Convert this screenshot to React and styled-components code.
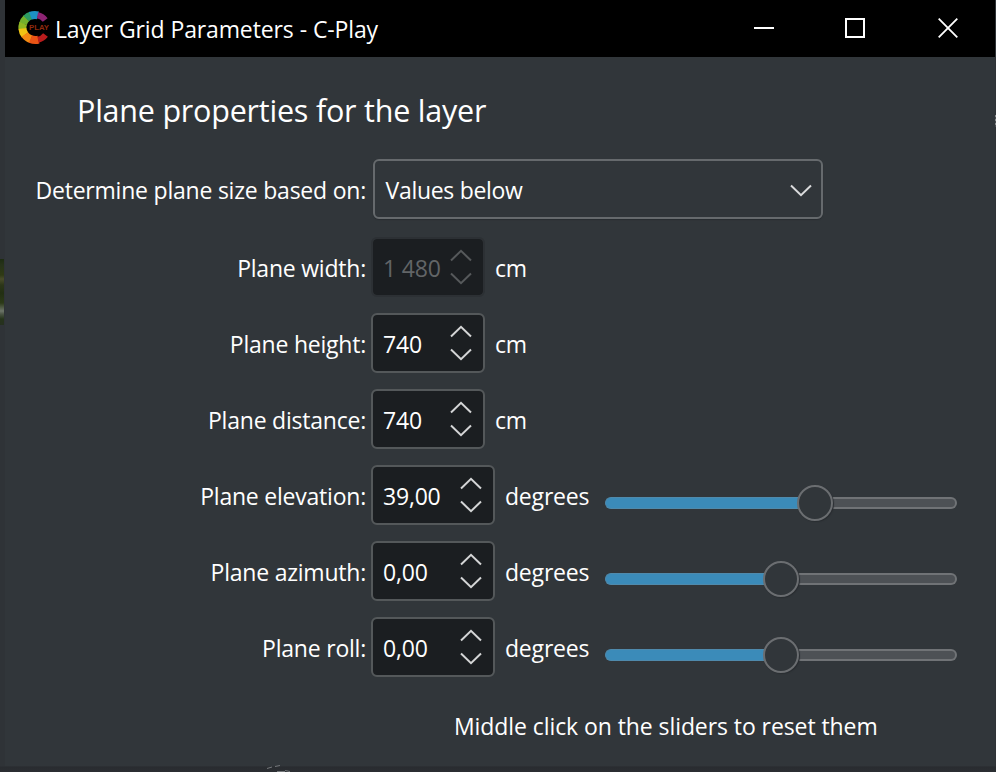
import React from "react";
import styled, { createGlobalStyle } from "styled-components";

const GlobalStyle = createGlobalStyle`
  *, *::before, *::after { box-sizing: border-box; }
  body { margin: 0; background: #2b2f33; overflow: hidden; }
`;

const Desktop = styled.div`
  position: relative;
  width: 996px;
  height: 772px;
  padding: 0 1px 6px 5px;
  background: linear-gradient(to bottom, #2f3337 0, #2f3337 766px, #292c30 767px, #2b2e32 772px);
  color: #fff;
  font-family: "Open Sans", "Noto Sans", sans-serif;
  font-size: 23px;
  line-height: 32px;
  white-space: pre;
  overflow: hidden;
`;

const Foliage = styled.div`
  position: absolute;
  left: 0;
  top: 259px;
  width: 4px;
  height: 66px;
  background: linear-gradient(
    to bottom,
    #1d2c12 0, #27331a 6px, #2f3a14 16px, #494c2a 20px, #2c3618 26px,
    #222f13 34px, #2c3a18 44px, #6c7468 52px, #4b5545 55px, #26341b 60px, #26301f 66px
  );
`;

const Debris = styled.svg`
  position: absolute;
  left: 262px;
  top: 764px;
`;

const EdgeMark = styled.div`
  position: absolute;
  right: 0;
  top: 115px;
  width: 1px;
  height: 12px;
  background: repeating-linear-gradient(to bottom, #8b8e90 0 2px, #4a4d50 2px 4px);
`;

const Window = styled.main`
  width: 990px;
  height: 766px;
  background: #31363a;
`;

const TitleBar = styled.header`
  height: 57px;
  display: flex;
  align-items: center;
  padding: 0 37px 1px 12px;
  background: #000;
`;

const Title = styled.h1`
  flex: 1;
  margin: 0 0 0 2px;
  font-size: 23px;
  font-weight: 400;
  letter-spacing: -0.15px;
  word-spacing: 0.3px;
  padding-top: 2px;
`;

const WindowButtons = styled.div`
  display: flex;
`;

const WindowButton = styled.button`
  display: flex;
  margin: 0 0 0 ${(p) => p.$gap || 0}px;
  padding: 0;
  border: 0;
  background: none;
  color: #fff;
`;

const Body = styled.section`
  padding-top: 37px;
`;

const Heading = styled.h2`
  margin: 0 0 0 72px;
  height: 32px;
  font-size: 30.5px;
  font-weight: 400;
  letter-spacing: -0.22px;
  line-height: 32px;
`;

const Form = styled.div`
  display: grid;
  row-gap: 16px;
  padding-top: 33px;
`;

const Row = styled.div`
  display: grid;
  grid-template-columns: 361px auto auto 1fr;
  column-gap: 5px;
  align-items: center;
  height: 60px;
  margin-bottom: ${(p) => (p.$spaced ? "2px" : "0")};
`;

const Label = styled.label`
  text-align: right;
  letter-spacing: -0.22px;
  padding-top: 2px;
`;

const Combo = styled.div`
  display: flex;
  align-items: center;
  justify-content: space-between;
  width: 450px;
  height: 60px;
  margin-left: 2px;
  padding: 2px 9px 0 10.5px;
  border: 2px solid #666a6d;
  border-radius: 6px;
  box-shadow: 0 1px 1px #292d31;
  letter-spacing: -0.3px;
`;

const ComboArrow = styled.span`
  display: flex;
  color: #dadbdc;
`;

const SpinBox = styled.div`
  display: flex;
  align-items: center;
  justify-content: space-between;
  width: ${(p) => (p.$wide ? 124 : 114)}px;
  height: 60px;
  padding: 0 11px 0 10px;
  border: 2px solid ${(p) => (p.$disabled ? "#2c3034" : "#54585a")};
  border-radius: 6px;
  background: #1b1e21;
  background-clip: padding-box;
  color: ${(p) => (p.$disabled ? "#626567" : "#fff")};
`;

const Value = styled.span`
  padding-top: 2px;
  letter-spacing: -0.2px;
`;

const Steppers = styled.span`
  display: flex;
  flex-direction: column;
  gap: 10px;
  color: ${(p) => (p.$disabled ? "#56595b" : "#d4d5d6")};
`;

const Unit = styled.span`
  padding: 2px 0 0 5px;
  letter-spacing: -0.2px;
`;

const SliderCell = styled.div`
  justify-self: end;
  margin-right: 38px;
`;

const Slider = styled.div`
  display: flex;
  align-items: center;
  width: 352px;
  height: 36px;
  margin-top: 16px;
`;

const Filled = styled.div`
  height: 12px;
  border: 1px solid #4f8aac;
  border-right: 0;
  border-radius: 6px 0 0 6px;
  background: #3b8bb9;
`;

const Knob = styled.div`
  flex: none;
  width: 36px;
  height: 36px;
  margin: 0 -2px 0 -1px;
  border: 2px solid #6b6e71;
  border-radius: 50%;
  background: #31363a;
  box-shadow: 1px 1px 1px #292d31;
  z-index: 1;
`;

const Remaining = styled.div`
  flex: 1;
  height: 12px;
  border: 2px solid #707376;
  border-left: 0;
  border-radius: 0 6px 6px 0;
  background: #4d5155;
`;

const Hint = styled.p`
  margin: 33px 0 0 449px;
  letter-spacing: -0.08px;
`;

function Chevron({ up }) {
  return (
    <svg width="22" height="13" viewBox="0 0 22 13" fill="none" stroke="currentColor" strokeWidth="2">
      <path d={up ? "M1 11.5 11 1.8 21 11.5" : "M1 1.5 11 11.2 21 1.5"} />
    </svg>
  );
}

function Logo() {
  return (
    <svg width="36" height="36" viewBox="0 0 36 36" fill="none" strokeWidth="8">
      <path d="M6 14 A12.5 12.5 0 0 1 9.5 8.2" stroke="#73b02c" />
      <path d="M9.2 8.5 A12.5 12.5 0 0 1 14 5.5" stroke="#2c9a62" />
      <path d="M13.4 5.8 A12.5 12.5 0 0 1 21 5.3" stroke="#1c90c4" />
      <path d="M20.5 5.2 A12.5 12.5 0 0 1 28.2 10" stroke="#8d2473" strokeWidth="6" />
      <path d="M5.4 19 A12.5 12.5 0 0 1 6.2 13.5" stroke="#8fb822" />
      <path d="M8 25 A12.5 12.5 0 0 1 5.4 18.5" stroke="#efc414" />
      <path d="M14 29.2 A12.5 12.5 0 0 1 7.7 24.5" stroke="#f38a13" />
      <path d="M21.5 29.6 A12.5 12.5 0 0 1 13.5 29" stroke="#ea5415" />
      <path d="M28.5 25 A12.5 12.5 0 0 1 21 29.7" stroke="#b91c1c" strokeWidth="6" />
      <text x="12" y="20" fill="#8f2a0d" fontFamily="Liberation Sans, sans-serif" fontSize="6.6" fontWeight="700" textLength="20" lengthAdjust="spacingAndGlyphs">PLAY</text>
    </svg>
  );
}

const ROWS = [
  { label: "Plane width:", value: "1 480", unit: "cm", disabled: true },
  { label: "Plane height:", value: "740", unit: "cm" },
  { label: "Plane distance:", value: "740", unit: "cm" },
  { label: "Plane elevation:", value: "39,00", unit: "degrees", filled: 193 },
  { label: "Plane azimuth:", value: "0,00", unit: "degrees", filled: 159 },
  { label: "Plane roll:", value: "0,00", unit: "degrees", filled: 159 },
];

function ParameterRow({ label, value, unit, disabled, filled }) {
  const hasSlider = filled !== undefined;
  return (
    <Row>
      <Label>{label}</Label>
      <SpinBox $wide={hasSlider} $disabled={disabled}>
        <Value>{value}</Value>
        <Steppers $disabled={disabled}>
          <Chevron up />
          <Chevron />
        </Steppers>
      </SpinBox>
      <Unit>{unit}</Unit>
      {hasSlider && (
        <SliderCell>
          <Slider>
            <Filled style={{ width: filled }} />
            <Knob />
            <Remaining />
          </Slider>
        </SliderCell>
      )}
    </Row>
  );
}

export default function App() {
  return (
    <>
      <GlobalStyle />
      <Desktop>
        <Window>
          <TitleBar>
            <Logo />
            <Title>Layer Grid Parameters - C-Play</Title>
            <WindowButtons>
              <WindowButton aria-label="Minimize">
                <svg width="20" height="20" viewBox="0 0 20 20" fill="currentColor">
                  <path d="M0 9h20v2H0z" />
                </svg>
              </WindowButton>
              <WindowButton aria-label="Maximize" $gap={71}>
                <svg width="20" height="20" viewBox="0 0 20 20" fill="none" stroke="currentColor" strokeWidth="2">
                  <path d="M1 1h18v18H1z" />
                </svg>
              </WindowButton>
              <WindowButton aria-label="Close" $gap={73}>
                <svg width="20" height="20" viewBox="0 0 20 20" fill="none" stroke="currentColor" strokeWidth="1.8">
                  <path d="M.7.7l18.6 18.6M19.3.7.7 19.3" />
                </svg>
              </WindowButton>
            </WindowButtons>
          </TitleBar>
          <Body>
            <Heading>Plane properties for the layer</Heading>
            <Form>
              <Row $spaced>
                <Label>Determine plane size based on:</Label>
                <Combo>
                  <span>Values below</span>
                  <ComboArrow>
                    <Chevron />
                  </ComboArrow>
                </Combo>
              </Row>
              {ROWS.map((row) => (
                <ParameterRow key={row.label} {...row} />
              ))}
            </Form>
            <Hint>Middle click on the sliders to reset them</Hint>
          </Body>
        </Window>
        <Foliage />
        <EdgeMark />
        <Debris width="32" height="8" viewBox="0 0 32 8" fill="none" stroke="#74777a">
          <path d="M5 4.5 10 3M13 2.5l5-1M15 7.5h8M23 6.5l5 1" />
        </Debris>
      </Desktop>
    </>
  );
}
